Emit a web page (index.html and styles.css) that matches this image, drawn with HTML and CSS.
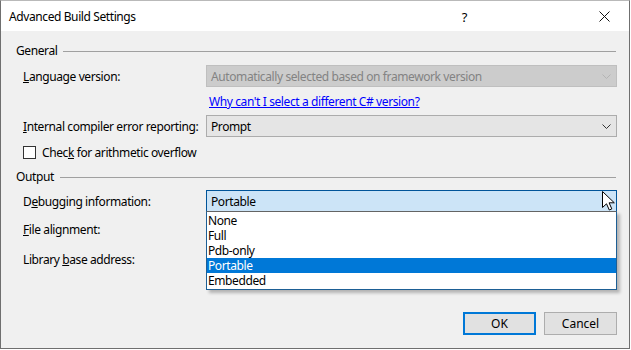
FILE: index.html
```html
<!DOCTYPE html>
<html lang="en">
<head>
    <meta charset="UTF-8">
    <title>Advanced Build Settings</title>
    <link rel="stylesheet" href="styles.css">
</head>
<body>
    <div class="window">
        <div class="titlebar">
            <span class="title">Advanced Build Settings</span>
            <span class="help">?</span>
            <svg class="close" width="11" height="11" viewBox="0 0 11 11">
                <path d="M0.5 0.5 L10.5 10.5 M10.5 0.5 L0.5 10.5" stroke="#111" stroke-width="1" fill="none"/>
            </svg>
        </div>

        <div class="content">
            <div class="group-head general"><span>General</span><div class="rule"></div></div>

            <div class="row first">
                <label><u>L</u>anguage version:</label>
                <div class="combo disabled">
                    <span>Automatically selected based on framework version</span>
                    <svg class="chev" width="9" height="5" viewBox="0 0 9 5"><path d="M0.5 0.5 L4.5 4.5 L8.5 0.5" stroke="#b4b4b4" fill="none"/></svg>
                </div>
            </div>
            <div class="link-row">
                <a href="#">Why can't I select a different C# version?</a>
            </div>

            <div class="row">
                <label><u>I</u>nternal compiler error reporting:</label>
                <div class="combo">
                    <span>Prompt</span>
                    <svg class="chev" width="9" height="5" viewBox="0 0 9 5"><path d="M0.5 0.5 L4.5 4.5 L8.5 0.5" stroke="#333" fill="none"/></svg>
                </div>
            </div>

            <div class="check-row">
                <span class="checkbox"></span>
                <span>Chec<u>k</u> for arithmetic overflow</span>
            </div>

            <div class="group-head output"><span>Output</span><div class="rule"></div></div>

            <div class="row">
                <label>D<u>e</u>bugging information:</label>
                <div class="combo-wrap">
                    <div class="combo focused">
                        <span>Portable</span>
                    </div>
                    <ul class="dropdown">
                        <li>None</li>
                        <li>Full</li>
                        <li>Pdb-only</li>
                        <li class="selected">Portable</li>
                        <li>Embedded</li>
                    </ul>
                    <svg class="cursor" width="14" height="21" viewBox="0 0 14 21">
                        <path d="M0.5 0.5 L0.5 16.5 L4.5 12.8 L7.3 19 L9.8 17.9 L7.1 11.8 L12.3 11.8 Z" fill="#fff" stroke="#000" stroke-width="1"/>
                    </svg>
                </div>
            </div>

            <div class="row plain">
                <label><u>F</u>ile alignment:</label>
            </div>
            <div class="row plain lib">
                <label>Library <u>b</u>ase address:</label>
            </div>

            <div class="footer">
                <button class="btn default">OK</button>
                <button class="btn">Cancel</button>
            </div>
        </div>
    </div>
</body>
</html>
```

FILE: styles.css
```css
* {
    margin: 0;
    padding: 0;
    box-sizing: border-box;
}

body {
    background: #ffffff;
    font-family: 'Noto Sans', 'Open Sans', sans-serif;
    font-size: 12px;
    letter-spacing: -0.4px;
    color: #000;
    white-space: nowrap;
}

.window {
    width: 630px;
    height: 349px;
    border: 1px solid #6f6f6f;
    border-top-color: #b9b9b9;
    background: #f0f0f0;
    display: flex;
    flex-direction: column;
}

.titlebar {
    height: 30px;
    background: #ffffff;
    display: flex;
    align-items: center;
    padding-left: 8px;
    padding-top: 1px;
}

.title {
    flex: 1;
    font-size: 12px;
}

.help {
    margin-right: 132px;
    font-size: 13px;
}

.close {
    margin-right: 19px;
}

.content {
    flex: 1;
    display: flex;
    flex-direction: column;
    padding-left: 15px;
}

.group-head {
    display: flex;
    align-items: center;
    height: 16px;
    padding-right: 13px;
}

.group-head .rule {
    flex: 1;
    height: 1px;
    background: #a0a0a0;
    margin-left: 6px;
    margin-top: 2px;
}

.general {
    margin-top: 11px;
}

.output {
    margin-top: 8px;
}

.row {
    display: flex;
    align-items: center;
    height: 22px;
    padding-left: 7px;
    margin-top: 6px;
}

.row.first {
    margin-top: 7px;
}

.row label {
    width: 183px;
}

.row.plain {
    margin-top: 6px;
}

.row.lib {
    margin-top: 8px;
}

.combo, .combo-wrap {
    width: 411px;
    height: 22px;
}

.combo-wrap {
    position: relative;
}

.combo {
    display: flex;
    align-items: center;
    justify-content: space-between;
    padding: 0 5px 0 4px;
    background: #e5e5e5;
    border: 1px solid #acacac;
}

.combo.disabled {
    background: #cccccc;
    border-color: #bfbfbf;
    color: #838383;
}

.combo.focused {
    background: #cce4f7;
    border-color: #005499;
}

.chev {
    display: block;
}

.link-row {
    height: 16px;
    margin-top: 6px;
    padding-left: 193px;
}

.link-row a {
    color: #0000ff;
}

.check-row {
    display: flex;
    align-items: center;
    height: 16px;
    margin-top: 7px;
    padding-left: 7px;
}

.checkbox {
    width: 13px;
    height: 13px;
    border: 1px solid #333;
    background: #fff;
    margin-right: 6px;
}

.dropdown {
    position: absolute;
    top: 21px;
    left: 0;
    width: 411px;
    list-style: none;
    background: #fff;
    border: 1px solid #1d5f95;
    border-top-color: #646464;
    padding: 1px 0 1px 0;
    box-shadow: 3px 3px 3px rgba(0, 0, 0, 0.25);
    z-index: 2;
}

.dropdown li {
    height: 15px;
    line-height: 15px;
    padding-left: 1px;
}

.dropdown li.selected {
    background: #0078d7;
    color: #fff;
}

.cursor {
    position: absolute;
    right: 1px;
    top: 1px;
    z-index: 3;
}

.footer {
    margin-top: auto;
    display: flex;
    justify-content: flex-end;
    gap: 8px;
    padding: 0 12px 13px 0;
}

.btn {
    width: 73px;
    height: 23px;
    background: #e1e1e1;
    border: 1px solid #adadad;
    font-family: inherit;
    font-size: 12px;
    letter-spacing: 0;
}

.btn.default {
    border: 2px solid #0078d7;
}
```
